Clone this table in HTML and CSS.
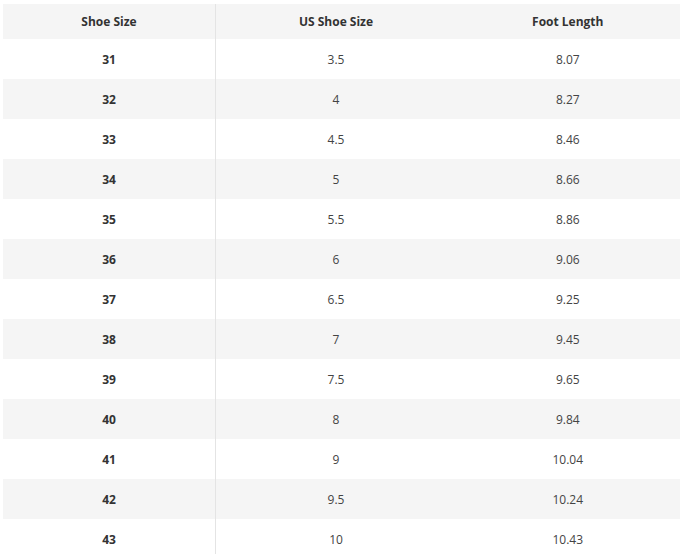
FILE: index.html
```html
<!DOCTYPE html>
<html>
<head>
<meta charset="utf-8">
<link rel="stylesheet" href="styles.css">
</head>
<body>
<table class="size-table">
  <thead>
    <tr><th>Shoe Size</th><th>US Shoe Size</th><th>Foot Length</th></tr>
  </thead>
  <tbody>
    <tr><td>31</td><td>3.5</td><td>8.07</td></tr>
    <tr><td>32</td><td>4</td><td>8.27</td></tr>
    <tr><td>33</td><td>4.5</td><td>8.46</td></tr>
    <tr><td>34</td><td>5</td><td>8.66</td></tr>
    <tr><td>35</td><td>5.5</td><td>8.86</td></tr>
    <tr><td>36</td><td>6</td><td>9.06</td></tr>
    <tr><td>37</td><td>6.5</td><td>9.25</td></tr>
    <tr><td>38</td><td>7</td><td>9.45</td></tr>
    <tr><td>39</td><td>7.5</td><td>9.65</td></tr>
    <tr><td>40</td><td>8</td><td>9.84</td></tr>
    <tr><td>41</td><td>9</td><td>10.04</td></tr>
    <tr><td>42</td><td>9.5</td><td>10.24</td></tr>
    <tr><td>43</td><td>10</td><td>10.43</td></tr>
  </tbody>
</table>
</body>
</html>
```
FILE: styles.css
```css
html, body {
  margin: 0;
  padding: 0;
  background: #ffffff;
}
body {
  padding: 4px 3px 0 3px;
  font-family: "Open Sans", "Noto Sans", sans-serif;
  font-size: 12px;
  color: #444;
}
.size-table {
  width: 677px;
  border-collapse: collapse;
  table-layout: fixed;
}
.size-table th,
.size-table td {
  text-align: center;
  padding: 0;
}
.size-table th {
  height: 35px;
  font-weight: 700;
  color: #333;
  background: #f5f5f5;
}
.size-table td {
  height: 40px;
}
.size-table th:nth-child(1),
.size-table td:nth-child(1) {
  width: 212px;
  border-right: 1px solid #e4e4e4;
}
.size-table th:nth-child(2) {
  width: 240px;
}
.size-table td:nth-child(1) {
  font-weight: 700;
  color: #333;
}
.size-table tbody tr:nth-child(even) td {
  background: #f5f5f5;
}
```
